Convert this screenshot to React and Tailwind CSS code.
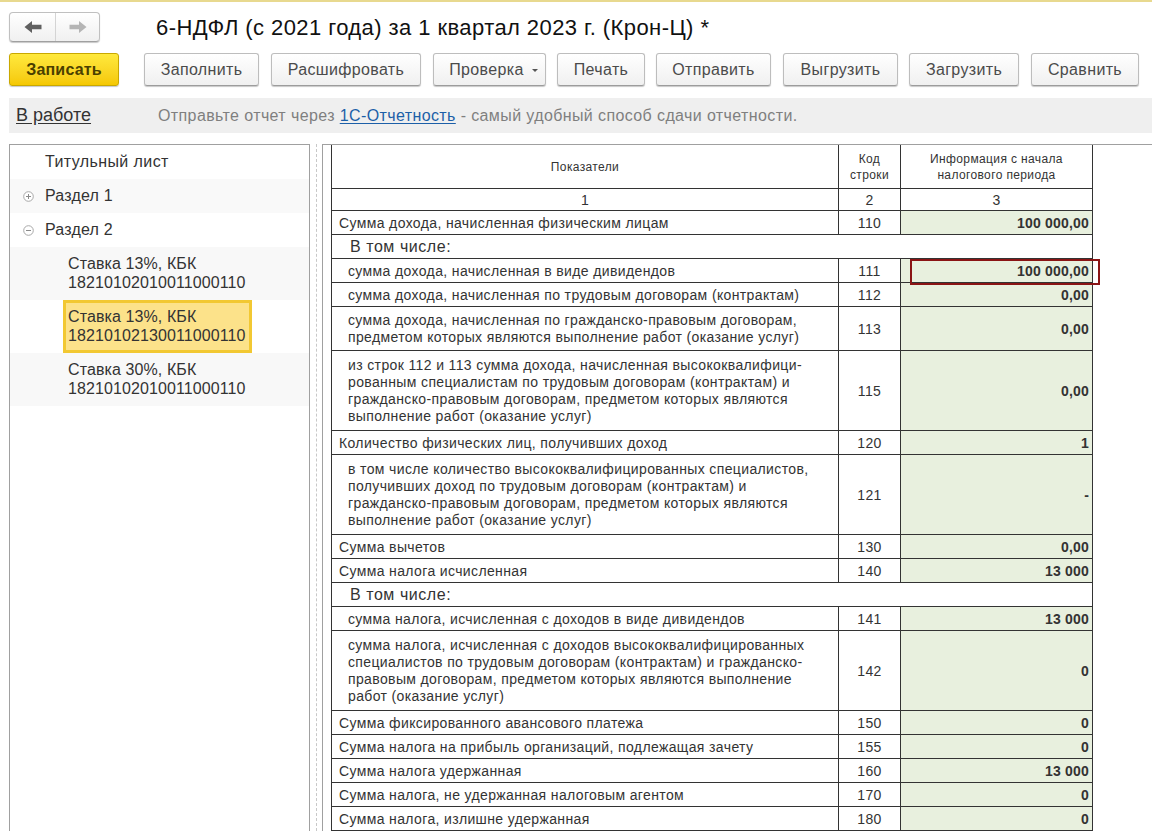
const btns = [
  ["Заполнить", "w-[115px] ml-[25px]"],
  ["Расшифровать", "w-[150px] ml-[12px]"],
  ["Проверка", "w-[113px] ml-[12px]"],
  ["Печать", "w-[88px] ml-[11px]"],
  ["Отправить", "w-[115px] ml-[11px]"],
  ["Выгрузить", "w-[115px] ml-[12px]"],
  ["Загрузить", "w-[110px] ml-[11px]"],
  ["Сравнить", "w-[108px] ml-[12px]"],
];

const rows = [
  { h: "h-[24px]", t: "Сумма дохода, начисленная физическим лицам", c: "110", v: "100 000,00", k: "top" },
  { h: "h-[24px]", t: "В том числе:", k: "sub" },
  { h: "h-[24px]", t: "сумма дохода, начисленная в виде дивидендов", c: "111", v: "100 000,00", mark: true },
  { h: "h-[24px]", t: "сумма дохода, начисленная по трудовым договорам (контрактам)", c: "112", v: "0,00" },
  { h: "h-[44px]", t: ["сумма дохода, начисленная по гражданско-правовым договорам,", "предметом которых являются выполнение работ (оказание услуг)"], c: "113", v: "0,00" },
  { h: "h-[80px]", t: ["из строк 112 и 113 сумма дохода, начисленная высококвалифици-", "рованным специалистам по трудовым договорам (контрактам) и", "гражданско-правовым договорам, предметом которых являются", "выполнение работ (оказание услуг)"], c: "115", v: "0,00" },
  { h: "h-[24px]", t: "Количество физических лиц, получивших доход", c: "120", v: "1", k: "top" },
  { h: "h-[80px]", t: ["в том числе количество высококвалифицированных специалистов,", "получивших доход по трудовым договорам (контрактам) и", "гражданско-правовым договорам, предметом которых являются", "выполнение работ (оказание услуг)"], c: "121", v: "-" },
  { h: "h-[24px]", t: "Сумма вычетов", c: "130", v: "0,00", k: "top" },
  { h: "h-[24px]", t: "Сумма налога исчисленная", c: "140", v: "13 000", k: "top" },
  { h: "h-[24px]", t: "В том числе:", k: "sub" },
  { h: "h-[24px]", t: "сумма налога, исчисленная с доходов в виде дивидендов", c: "141", v: "13 000" },
  { h: "h-[80px]", t: ["сумма налога, исчисленная с доходов высококвалифицированных", "специалистов по трудовым договорам (контрактам) и гражданско-", "правовым договорам, предметом которых являются выполнение", "работ (оказание услуг)"], c: "142", v: "0" },
  { h: "h-[24px]", t: "Сумма фиксированного авансового платежа", c: "150", v: "0", k: "top" },
  { h: "h-[24px]", t: "Сумма налога на прибыль организаций, подлежащая зачету", c: "155", v: "0", k: "top" },
  { h: "h-[24px]", t: "Сумма налога удержанная", c: "160", v: "13 000", k: "top" },
  { h: "h-[24px]", t: "Сумма налога, не удержанная налоговым агентом", c: "170", v: "0", k: "top" },
  { h: "h-[24px]", t: "Сумма налога, излишне удержанная", c: "180", v: "0", k: "top" },
];

function Arrow({ dir, color }) {
  return (
    <svg width="18" height="14" viewBox="0 0 18 14" className={dir === "right" ? "rotate-180" : ""}>
      <path d="M0.5 7 L8 1 V4.8 H17.5 V9.2 H8 V13 Z" fill={color} />
    </svg>
  );
}

function Toggle({ minus }) {
  return (
    <svg width="11" height="11" viewBox="0 0 11 11" className="shrink-0">
      <circle cx="5.5" cy="5.5" r="4.8" fill="#fff" stroke="#a8a8a8" />
      <path d={minus ? "M3 5.5H8" : "M3 5.5H8M5.5 3V8"} stroke="#8a8a8a" />
    </svg>
  );
}

function ToolBtn({ label, cls }) {
  return (
    <div className={`${cls} h-[33px] flex items-center justify-center rounded-[3px] border border-[#bdbdbd] border-b-[#9c9c9c] bg-gradient-to-b from-white to-[#f0f0f0] text-[16px] tracking-[0.35px] text-[#4b4b4b] shadow-[0_1px_1px_#c8c8c8] ${label === "Проверка" ? "pl-[8px]" : ""}`}>
      {label}
      {label === "Проверка" && <span className="ml-[8px] mb-[-2px] w-0 h-0 border-x-[3px] border-x-transparent border-t-[3px] border-t-[#555]" />}
    </div>
  );
}

function Stavka({ a, b, bg }) {
  return (
    <div className={`h-[53px] pl-[58px] pt-[7px] text-[16px] leading-[19px] tracking-[0.1px] text-[#333] ${bg}`}>
      <div>{a}</div>
      <div>{b}</div>
    </div>
  );
}

export default function App() {
  return (
    <div className="w-[1152px] h-[831px] overflow-hidden bg-white flex flex-col font-['Liberation_Sans',Arial,sans-serif]">
      <div className="h-[2px] shrink-0 bg-[#e8d98f]" />
      <div className="h-[40px] pt-[10px] pl-[9px] flex items-start shrink-0">
        <div className="w-[91px] h-[30px] flex rounded-[4px] border border-[#c0c0c0] border-b-[#a0a0a0] bg-gradient-to-b from-white to-[#f0f0f0] shadow-[0_1px_1px_#c8c8c8]">
          <div className="w-[46px] flex items-center justify-center border-r border-[#d4d4d4]"><Arrow dir="left" color="#606060" /></div>
          <div className="flex-1 flex items-center justify-center"><Arrow dir="right" color="#b5b5b5" /></div>
        </div>
        <div className="ml-[56px] mt-[1px] text-[22px] tracking-[0.42px] leading-[30px] text-[#111] whitespace-nowrap">6-НДФЛ (с 2021 года) за 1 квартал 2023 г. (Крон-Ц) *</div>
      </div>
      <div className="h-[33px] mt-[11px] ml-[9px] flex shrink-0">
        <div className="w-[110px] h-[33px] flex items-center justify-center rounded-[3px] border border-[#c9a800] bg-gradient-to-b from-[#ffe93b] to-[#f5c800] text-[16px] font-bold tracking-[0.2px] text-[#4a3f00] shadow-[0_1px_1px_#c8c8c8]">Записать</div>
        {btns.map(([l, c]) => <ToolBtn key={l} label={l} cls={c} />)}
      </div>
      <div className="h-[35px] mt-[12px] ml-[9px] bg-[#efefef] flex items-center shrink-0 text-[16px]">
        <span className="ml-[7px] text-[18px] underline underline-offset-2 text-[#333]">В работе</span>
        <span className="ml-[67px] tracking-[0.39px] text-[#7f7f7f]">Отправьте отчет через <span className="underline underline-offset-2 text-[#1c5fa8]">1С-Отчетность</span> - самый удобный способ сдачи отчетности.</span>
      </div>
      <div className="mt-[11px] flex flex-1 min-h-0">
        <div className="ml-[9px] w-[301px] border border-b-0 border-[#a0a0a0] text-[16px] text-[#333] shrink-0">
          <div className="h-[34px] pl-[35px] tracking-[0.4px] flex items-center">Титульный лист</div>
          <div className="h-[34px] pl-[13px] flex items-center gap-[11px] tracking-[0.2px] bg-[#f9f9f9]"><Toggle /><span>Раздел 1</span></div>
          <div className="h-[34px] pl-[13px] flex items-center gap-[11px] tracking-[0.2px]"><Toggle minus /><span>Раздел 2</span></div>
          <Stavka a="Ставка 13%, КБК" b="18210102010011000110" bg="bg-[#f8f8f8]" />
          <div className="h-[53px] pl-[53px]">
            <div className="w-[189px] h-[53px] border-[3px] border-[#f2c832] bg-[#fce28a] pl-[2px] pt-[4px] leading-[19px] tracking-[0.1px]">
              <div>Ставка 13%, КБК</div>
              <div>18210102130011000110</div>
            </div>
          </div>
          <Stavka a="Ставка 30%, КБК" b="18210102010011000110" bg="bg-[#f8f8f8]" />
        </div>
        <div className="w-[12px] shrink-0 flex justify-center"><div className="h-full border-l border-dashed border-[#c8c8c8]" /></div>
        <div className="flex-1 min-w-0 border-l border-t border-[#a0a0a0] pl-[8px]">
          <table className="table-fixed border-collapse w-[761px] text-[14px] tracking-[0.37px] text-[#333] leading-[17px]">
            <colgroup>
              <col className="w-[507px]" />
              <col className="w-[62px]" />
              <col className="w-[192px]" />
            </colgroup>
            <tbody>
              <tr className="h-[43px]">
                <td className="border-x border-b border-[#333] pt-[2px] text-center text-[12px]">Показатели</td>
                <td className="border-x border-b border-[#333] pt-[2px] text-center text-[12px] leading-[16px]">Код<br />строки</td>
                <td className="border-x border-b border-[#333] pt-[2px] text-center text-[12px] leading-[16px]">Информация с начала<br />налогового периода</td>
              </tr>
              <tr className="h-[22px]">
                <td className="border border-[#333] pt-[2px] text-center">1</td>
                <td className="border border-[#333] pt-[2px] text-center">2</td>
                <td className="border border-[#333] pt-[2px] text-center">3</td>
              </tr>
              {rows.map((r, i) => (
                <tr key={i} className={r.h}>
                  {r.k === "sub" ? (
                    <td colSpan={3} className="border border-[#333] pl-[18px] text-[16px] tracking-[0.55px]">{r.t}</td>
                  ) : (
                    <>
                      <td className={`border border-[#333] pt-[2px] ${r.k === "top" ? "pl-[7px]" : "pl-[16px]"}`}>
                        {Array.isArray(r.t) ? r.t.map((l) => <div key={l}>{l}</div>) : r.t}
                      </td>
                      <td className="border border-[#333] pt-[2px] text-center">{r.c}</td>
                      <td className="relative border border-[#333] pt-[2px] bg-[#e8f0de] text-right pr-[3px] font-bold tracking-[0.2px]">
                        {r.v}
                        {r.mark && <div className="absolute z-10 left-[9px] top-0 w-[190px] h-[26px] border-2 border-[#8a1414]" />}
                      </td>
                    </>
                  )}
                </tr>
              ))}
            </tbody>
          </table>
        </div>
      </div>
    </div>
  );
}
